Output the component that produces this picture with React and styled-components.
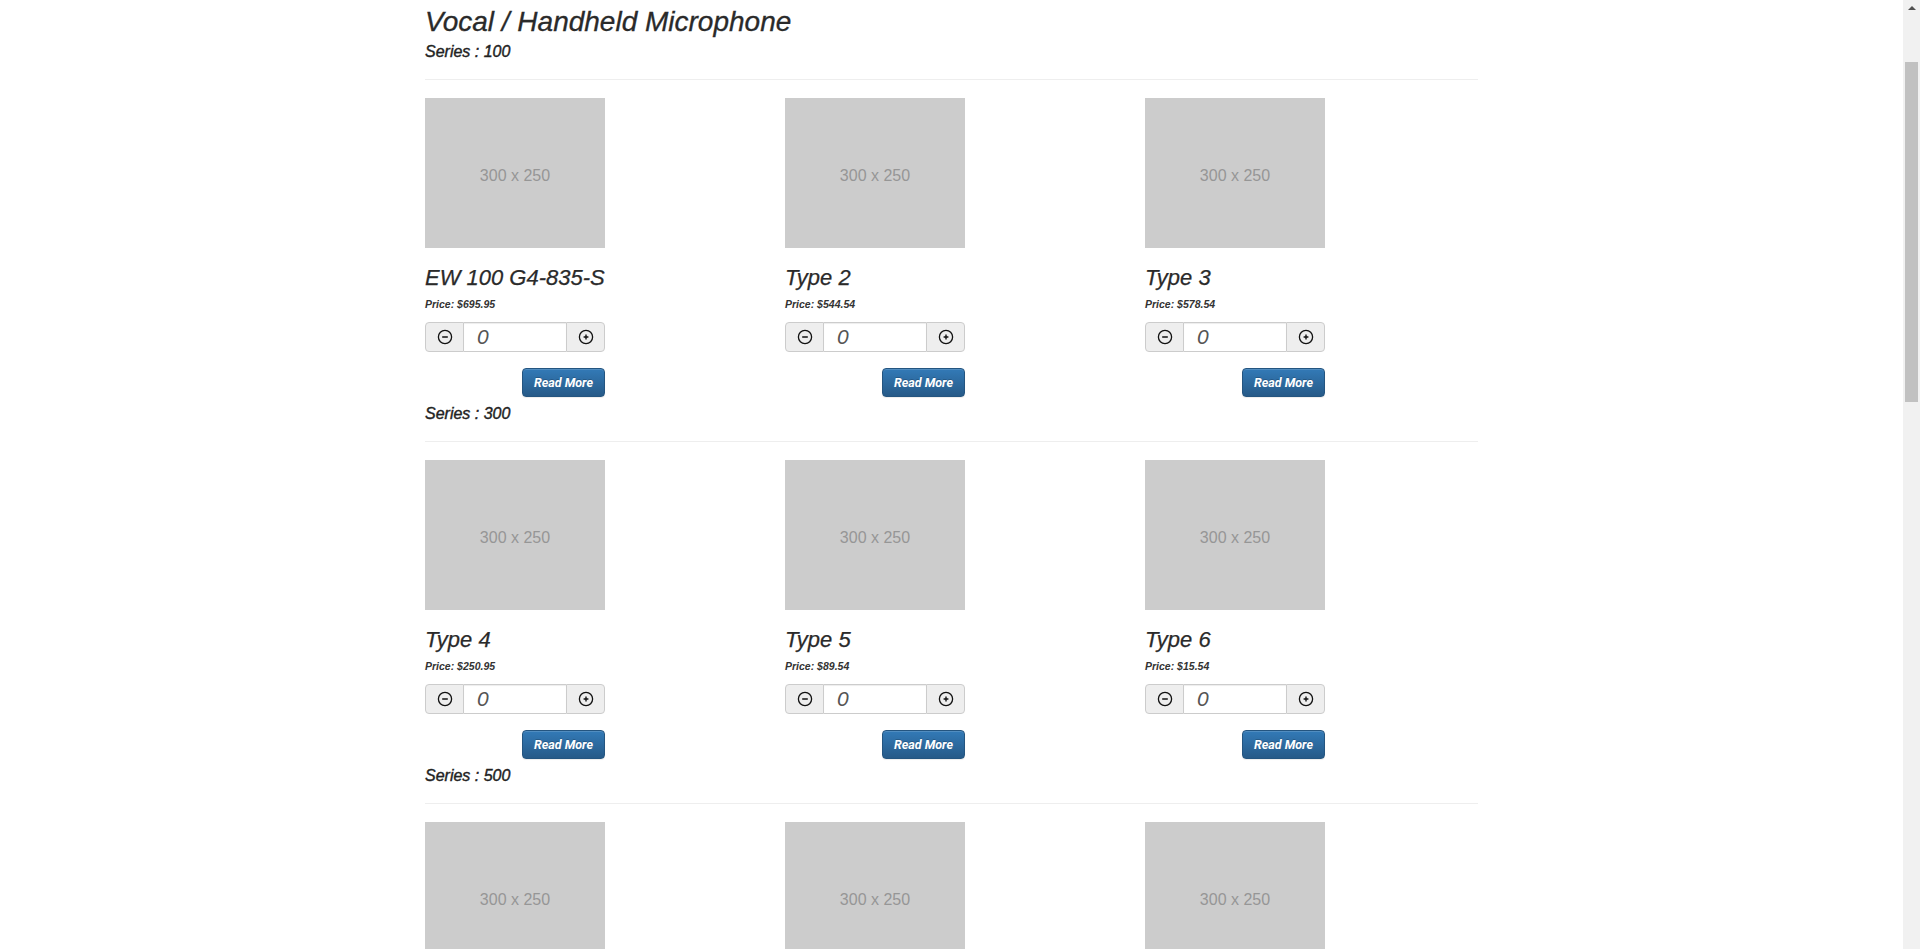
import React from 'react';
import styled, { createGlobalStyle } from 'styled-components';

const GlobalStyle = createGlobalStyle`
	html, body {
		scrollbar-width: none;
	}
	body {
		margin: 0;
		padding-right: 17px;
		background: #fff;
		font-family: "Liberation Sans", Arial, sans-serif;
		color: #333;
	}
	body::-webkit-scrollbar {
		display: none;
	}
`;

const Page = styled.main`
	width: 1053px;
	margin: 0 auto;
	padding: 6px 0 40px;
`;

const ScrollRail = styled.aside`
	position: fixed;
	top: 0;
	right: 0;
	width: 17px;
	height: 100vh;
	background: #f1f1f1;
	display: flex;
	flex-direction: column;
	align-items: center;
`;

const ScrollArrow = styled.div`
	margin-top: 6px;
	width: 0;
	height: 0;
	border-left: 4px solid transparent;
	border-right: 4px solid transparent;
	border-bottom: 4px solid #505050;
`;

const ScrollThumb = styled.div`
	margin-top: 52px;
	width: 13px;
	height: 340px;
	background: #c1c1c1;
`;

const PageTitle = styled.h2`
	margin: 0;
	font-size: 28px;
	line-height: 32px;
	font-style: italic;
	font-weight: 400;
	color: #2a2a2a;
	-webkit-text-stroke: 0.3px #2a2a2a;
`;

const SeriesLabel = styled.h4`
	margin: ${props => props.first ? '5px' : '8px'} 0 0;
	font-size: 16px;
	line-height: 18px;
	font-style: italic;
	font-weight: 400;
	color: #222;
	-webkit-text-stroke: 0.4px #222;
`;

const Divider = styled.hr`
	border: 0;
	border-top: 1px solid #eee;
	margin: 18px 0;
`;

const ProductGrid = styled.div`
	display: grid;
	grid-template-columns: repeat(3, 180px);
	column-gap: 180px;
`;

const Card = styled.div`
	display: flex;
	flex-direction: column;
	width: 180px;
`;

const Placeholder = styled.div`
	width: 180px;
	height: 150px;
	box-sizing: border-box;
	padding-top: 5px;
	background: #ccc;
	color: #969696;
	display: flex;
	align-items: center;
	justify-content: center;
	font-size: 16px;
	font-family: "Liberation Sans", Arial, sans-serif;
`;

const ProductName = styled.h3`
	margin: 17px 0 0;
	font-size: 22px;
	line-height: 26px;
	font-style: italic;
	font-weight: 400;
	color: #2a2a2a;
	-webkit-text-stroke: 0.25px #2a2a2a;
	white-space: nowrap;
`;

const Price = styled.p`
	margin: 6px 0 0;
	font-size: 10.5px;
	line-height: 14px;
	font-style: italic;
	font-weight: 700;
	color: #333;
`;

const QtyGroup = styled.div`
	display: flex;
	height: 30px;
	margin-top: 11px;
`;

const QtyButton = styled.button`
	width: 39px;
	height: 30px;
	padding: 0;
	display: flex;
	align-items: center;
	justify-content: center;
	background: #eee;
	border: 1px solid #ccc;
	border-radius: ${props => props.side === 'left' ? '4px 0 0 4px' : '0 4px 4px 0'};
	color: #111;
	cursor: pointer;
`;

const QtyInput = styled.input`
	width: 102px;
	height: 30px;
	box-sizing: border-box;
	border: 1px solid #ccc;
	border-left: 0;
	border-right: 0;
	box-shadow: inset 0 1px 1px rgba(0, 0, 0, .075);
	padding: 0 0 0 13px;
	font-family: "Liberation Sans", Arial, sans-serif;
	font-size: 21px;
	font-style: italic;
	color: #555;
	outline: none;
`;

const ReadMore = styled.button`
	align-self: flex-end;
	margin-top: 16px;
	height: 29px;
	padding: 0 11px;
	border: 1px solid #245580;
	border-radius: 4px;
	background-image: linear-gradient(to bottom, #337ab7 0, #265a88 100%);
	box-shadow: inset 0 1px 0 rgba(255, 255, 255, .15), 0 1px 1px rgba(0, 0, 0, .075);
	color: #fff;
	text-shadow: 0 -1px 0 rgba(0, 0, 0, .2);
	font-family: Roboto, "Liberation Sans", sans-serif;
	font-size: 12.5px;
	font-style: italic;
	font-weight: 700;
	cursor: pointer;
`;

const CircleIcon = ({plus}) => (
	<svg width="16" height="16" viewBox="0 0 16 16" fill="none" stroke="currentColor" strokeWidth="1.3">
		<circle cx="8" cy="8" r="6.6" />
		{plus
			? <path d="M8 5.6v4.8M5.6 8h4.8" strokeWidth="1.4" />
			: <path d="M5.2 8h5.6" strokeWidth="1.5" />}
	</svg>
);

const series = [
	{name: '100', products: [
		{name: 'EW 100 G4-835-S', price: '695.95'},
		{name: 'Type 2', price: '544.54'},
		{name: 'Type 3', price: '578.54'},
	]},
	{name: '300', products: [
		{name: 'Type 4', price: '250.95'},
		{name: 'Type 5', price: '89.54'},
		{name: 'Type 6', price: '15.54'},
	]},
	{name: '500', products: [
		{name: 'Type 7', price: '320.95'},
		{name: 'Type 8', price: '412.54'},
		{name: 'Type 9', price: '128.54'},
	]},
	{name: '1000', products: [
		{name: 'Type 10', price: '845.95'},
		{name: 'Type 11', price: '299.54'},
		{name: 'Type 12', price: '64.54'},
	]},
	{name: '2000', products: [
		{name: 'Type 13', price: '1095.95'},
		{name: 'Type 14', price: '744.54'},
		{name: 'Type 15', price: '378.54'},
	]},
	{name: '6000', products: [
		{name: 'Type 16', price: '1450.95'},
		{name: 'Type 17', price: '989.54'},
		{name: 'Type 18', price: '215.54'},
	]},
	{name: '9000', products: [
		{name: 'Type 19', price: '2250.95'},
		{name: 'Type 20', price: '1189.54'},
		{name: 'Type 21', price: '515.54'},
	]},
];

const ProductCard = ({product}) => (
	<Card>
		<Placeholder>300 x 250</Placeholder>
		<ProductName>{product.name}</ProductName>
		<Price>Price: ${product.price}</Price>
		<QtyGroup>
			<QtyButton side="left" aria-label="decrease"><CircleIcon /></QtyButton>
			<QtyInput type="text" defaultValue="0" />
			<QtyButton side="right" aria-label="increase"><CircleIcon plus /></QtyButton>
		</QtyGroup>
		<ReadMore>Read More</ReadMore>
	</Card>
);

export default function App() {
	return (
		<>
			<GlobalStyle />
			<Page>
				<PageTitle>Vocal / Handheld Microphone</PageTitle>
				{series.map((s, i) => (
					<section key={s.name}>
						<SeriesLabel first={i === 0}>Series : {s.name}</SeriesLabel>
						<Divider />
						<ProductGrid>
							{s.products.map(p => <ProductCard key={p.name} product={p} />)}
						</ProductGrid>
					</section>
				))}
			</Page>
			<ScrollRail aria-hidden="true">
				<ScrollArrow />
				<ScrollThumb />
			</ScrollRail>
		</>
	);
}
